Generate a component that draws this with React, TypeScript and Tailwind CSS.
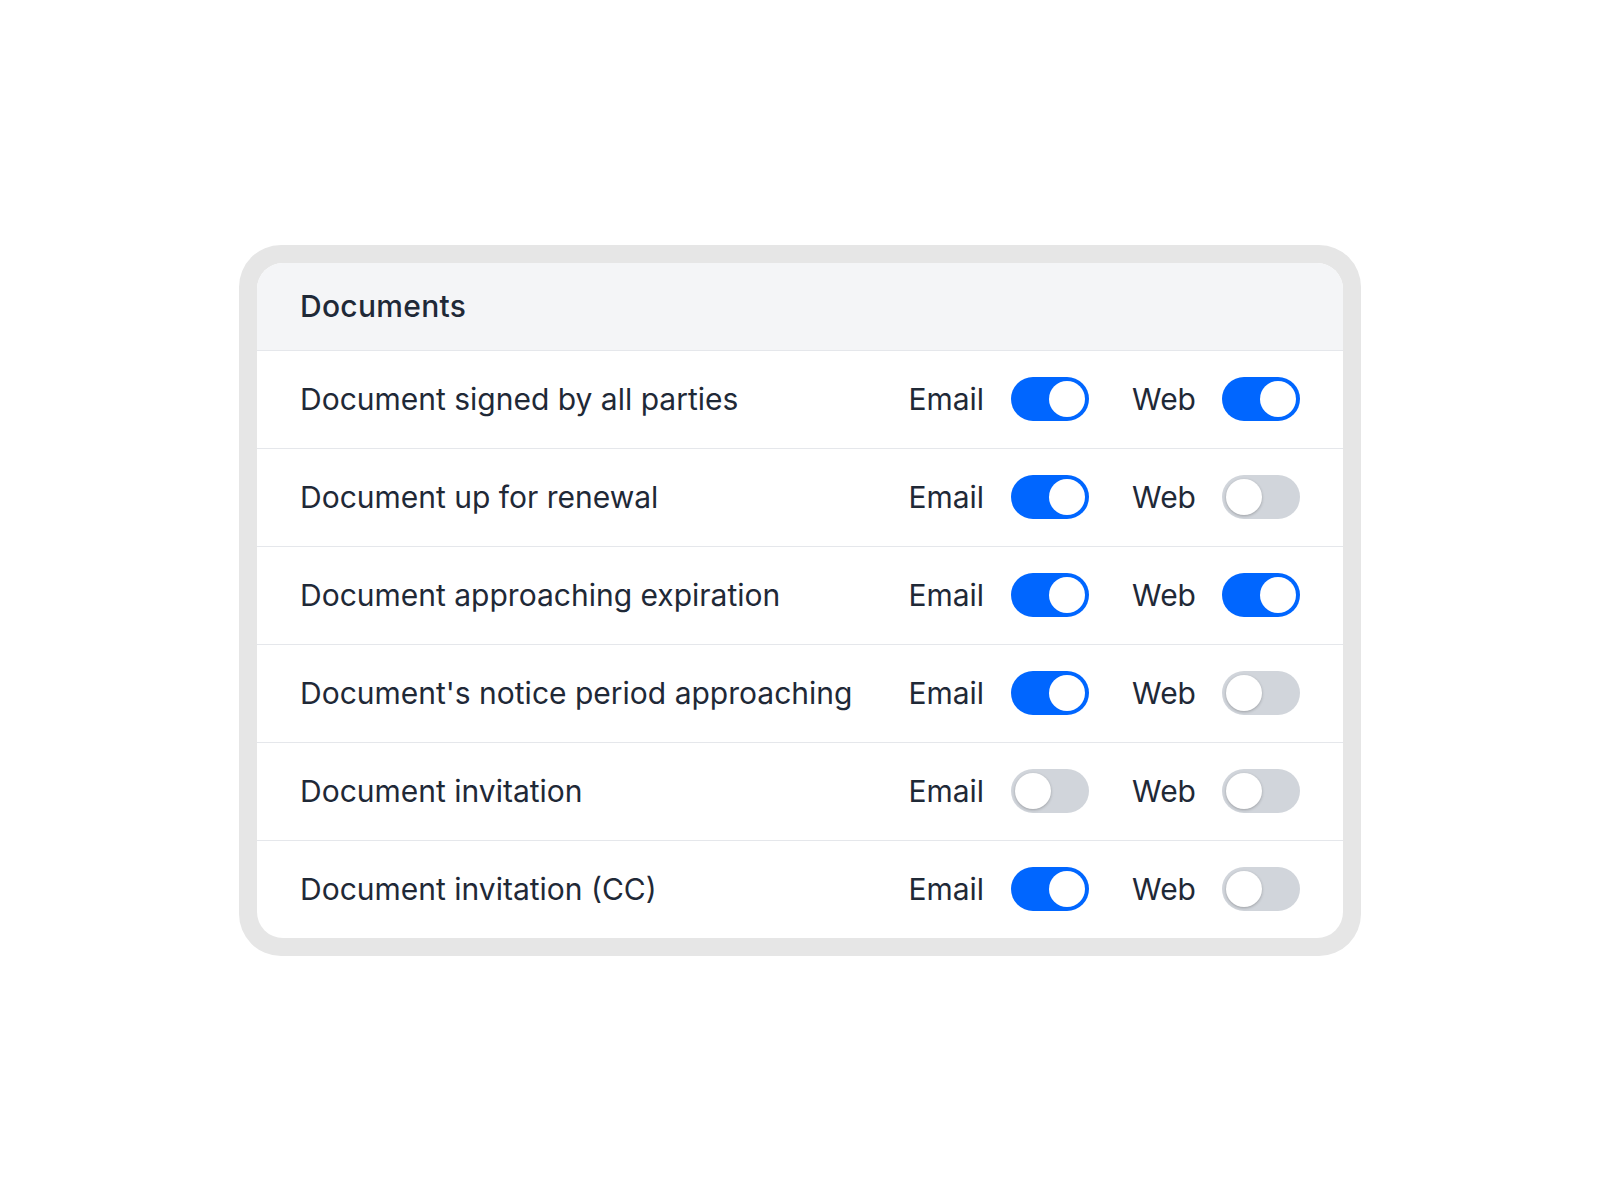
import React, { useState } from 'react';

interface NotificationRow {
  label: string;
  email: boolean;
  web: boolean;
}

const initialRows: NotificationRow[] = [
  { label: 'Document signed by all parties', email: true, web: true },
  { label: 'Document up for renewal', email: true, web: false },
  { label: 'Document approaching expiration', email: true, web: true },
  { label: "Document's notice period approaching", email: true, web: false },
  { label: 'Document invitation', email: false, web: false },
  { label: 'Document invitation (CC)', email: true, web: false },
];

const Toggle: React.FC<{ on: boolean; onChange: () => void }> = ({ on, onChange }) => (
  <button
    type="button"
    onClick={onChange}
    className={`relative flex h-[44px] w-[78px] shrink-0 items-center rounded-full p-[4px] transition-colors ${
      on ? 'bg-[#0066ff] justify-end' : 'bg-[#d1d5db] justify-start'
    }`}
  >
    <span
      className={`block h-[36px] w-[36px] rounded-full bg-white ${
        on ? '' : 'shadow-[0_1px_3px_rgba(0,0,0,0.25)]'
      }`}
    />
  </button>
);

const App: React.FC = () => {
  const [rows, setRows] = useState(initialRows);

  const flip = (idx: number, key: 'email' | 'web') => {
    setRows(prev => prev.map((r, i) => (i === idx ? { ...r, [key]: !r[key] } : r)));
  };

  return (
    <div
      className="min-h-screen w-full bg-white flex items-center justify-center"
      style={{ fontFamily: 'Inter, "Noto Sans", sans-serif' }}
    >
      <div className="w-[1122px] rounded-[42px] bg-[#e6e6e6] p-[18px]">
        <div className="overflow-hidden rounded-[26px] bg-white">
          {/* Section header */}
          <div className="flex h-[88px] items-center bg-[#f4f5f7] px-[43px] border-b border-[#e5e7eb]">
            <h2 className="text-[30px] font-medium text-[#1f2937] tracking-[0.01em]">Documents</h2>
          </div>

          {rows.map((row, i) => (
            <div
              key={row.label}
              className={`flex items-center justify-between px-[43px] ${
                i < rows.length - 1 ? 'border-b border-[#e5e7eb] h-[98px]' : 'h-[97px]'
              }`}
            >
              <span className="text-[30px] text-[#1f2937]">{row.label}</span>
              <div className="flex items-center">
                <span className="text-[30px] text-[#1f2937] mr-[27px]">Email</span>
                <Toggle on={row.email} onChange={() => flip(i, 'email')} />
                <span className="text-[30px] text-[#1f2937] ml-[43px] mr-[26px]">Web</span>
                <Toggle on={row.web} onChange={() => flip(i, 'web')} />
              </div>
            </div>
          ))}
        </div>
      </div>
    </div>
  );
};

export default App;
